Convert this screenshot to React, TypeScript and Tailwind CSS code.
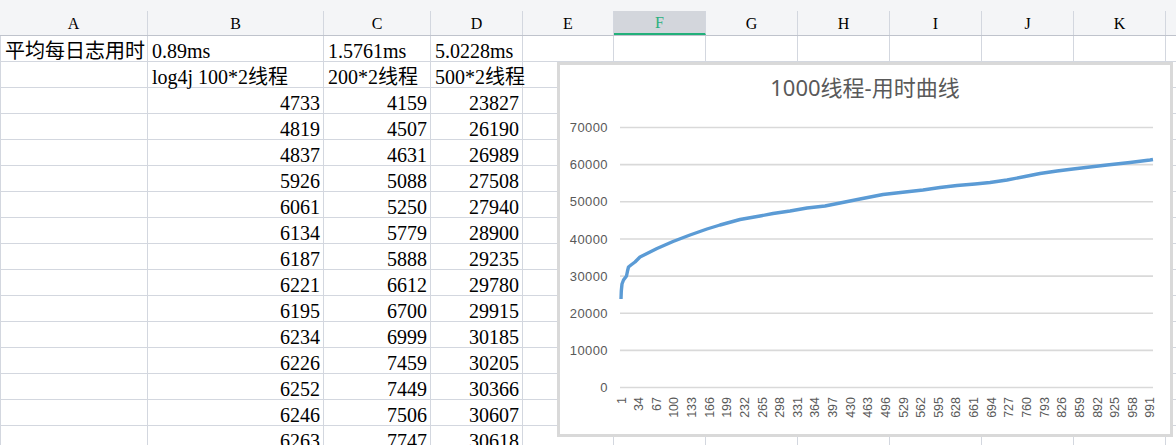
import React from 'react';

const colW = [
  'w-[148px]',
  'w-[176px]',
  'w-[107px]',
  'w-[92px]',
  'w-[91px]',
  'w-[92px]',
  'w-[92px]',
  'w-[92px]',
  'w-[92px]',
  'w-[92px]',
  'w-[92px]',
];

const letters = ['A', 'B', 'C', 'D', 'E', 'F', 'G', 'H', 'I', 'J', 'K'];

const textRows: string[][] = [
  ['平均每日志用时', '0.89ms', '1.5761ms', '5.0228ms'],
  ['', 'log4j 100*2线程', '200*2线程', '500*2线程'],
];

const numRows: number[][] = [
  [4733, 4159, 23827],
  [4819, 4507, 26190],
  [4837, 4631, 26989],
  [5926, 5088, 27508],
  [6061, 5250, 27940],
  [6134, 5779, 28900],
  [6187, 5888, 29235],
  [6221, 6612, 29780],
  [6195, 6700, 29915],
  [6234, 6999, 30185],
  [6226, 7459, 30205],
  [6252, 7449, 30366],
  [6246, 7506, 30607],
  [6263, 7747, 30618],
];

const curve: [number, number][] = [
  [621, 299],
  [621.3, 291],
  [622, 284],
  [623.5, 280],
  [625, 278],
  [626.5, 276],
  [627.5, 271],
  [628.5, 267],
  [631, 265],
  [635, 262],
  [640, 257],
  [650, 252],
  [657, 248.5],
  [665, 245],
  [673, 241.5],
  [690, 235],
  [707, 229],
  [720, 225],
  [740, 219.5],
  [760, 216],
  [773, 213.5],
  [790, 211],
  [807, 208],
  [825, 206],
  [840, 203],
  [860, 199],
  [883, 194.5],
  [905, 192],
  [923, 190],
  [940, 187.5],
  [957, 185.5],
  [975, 184],
  [990, 182.5],
  [1007, 180],
  [1025, 176.5],
  [1040, 173.5],
  [1057, 171],
  [1073, 169],
  [1090, 167],
  [1107, 165],
  [1130, 162.5],
  [1150, 160],
  [1153, 159.5],
];

const cellFont = "font-['Liberation_Serif','Noto_Sans_CJK_SC',serif]";

function Row({ cells, align }: { cells: (string | number)[]; align: 'left' | 'right' }) {
  return (
    <div className="flex h-[26px] shrink-0">
      {colW.map((w, i) => (
        <div
          key={i}
          className={`${w} ${i === 0 ? 'border-l' : ''} shrink-0 border-r border-b border-[#d3d7df] flex items-end ${
            align === 'right' && i > 0 ? 'justify-end pr-[3px]' : 'justify-start pl-[4px]'
          }`}
        >
          <span className={`${cellFont} text-[20px] leading-[20px] text-black whitespace-nowrap`}>
            {cells[i] ?? ''}
          </span>
        </div>
      ))}
      <div className="flex-1 border-b border-[#d3d7df]" />
    </div>
  );
}

function Chart() {
  const ox = 560;
  const oy = 65;
  const grid = Array.from({ length: 8 }, (_, k) => ({ y: 387.5 - 37.14 * k, label: String(k * 10000) }));
  const xs = Array.from({ length: 31 }, (_, i) => ({ x: 621 + 17.63 * i, label: String(1 + 33 * i) }));
  return (
    <div className="absolute left-[557px] top-[62px] w-[616px] h-[375px] border-[3px] border-[#d9d9d9] bg-white">
      <svg width={610} height={369} className="block">
        <g transform={`translate(${-ox},${-oy})`}>
          <text
            x={865}
            y={96}
            textAnchor="middle"
            fill="#595959"
            fontSize={22}
            fontFamily="'Noto Sans','Noto Sans CJK SC',sans-serif"
          >
            1000线程-用时曲线
          </text>
          {grid.map((g) => (
            <g key={g.label}>
              <line x1={620} x2={1153} y1={g.y} y2={g.y} stroke="#d9d9d9" strokeWidth={1.6} />
              <text
                x={608}
                y={g.y + 4.6}
                textAnchor="end"
                fill="#595959"
                fontSize={13}
                letterSpacing={0.4}
                fontFamily="'Liberation Sans',Arial,sans-serif"
              >
                {g.label}
              </text>
            </g>
          ))}
          {xs.map((t) => (
            <text
              key={t.label}
              x={0}
              y={0}
              transform={`translate(${t.x + 4.5},397) rotate(-90)`}
              textAnchor="end"
              fill="#595959"
              fontSize={12.5}
              fontFamily="'Liberation Sans',Arial,sans-serif"
            >
              {t.label}
            </text>
          ))}
          <polyline
            points={curve.map(([x, y]) => `${x},${y}`).join(' ')}
            fill="none"
            stroke="#5b9bd5"
            strokeWidth={3.4}
            strokeLinejoin="round"
            strokeLinecap="butt"
          />
        </g>
      </svg>
    </div>
  );
}

export default function App() {
  return (
    <div className="relative w-[1176px] h-[445px] overflow-hidden bg-white">
      {/* column header */}
      <div className="flex h-[36px] bg-[#f4f5f7] border-b border-[#bfc3cc]">
        {colW.map((w, i) => (
          <div key={i} className={`${w} shrink-0 pt-[11px] h-full`}>
            <div
              className={`h-full border-r border-[#d3d7df] flex items-center justify-center ${
                letters[i] === 'F' ? 'bg-[#d3d6dc] border-b-2 border-b-[#22b07a] text-[#2bb07f]' : 'text-black'
              }`}
            >
              <span className="font-['Liberation_Serif',serif] text-[16px] leading-[16px] pt-[1px]">{letters[i]}</span>
            </div>
          </div>
        ))}
        <div className="flex-1" />
      </div>
      <div className="flex flex-col">
        {textRows.map((r, i) => (
          <Row key={`t${i}`} cells={r} align="left" />
        ))}
        {numRows.map((r, i) => (
          <Row key={`n${i}`} cells={['', ...r.map(String)]} align="right" />
        ))}
      </div>
      <Chart />
    </div>
  );
}
